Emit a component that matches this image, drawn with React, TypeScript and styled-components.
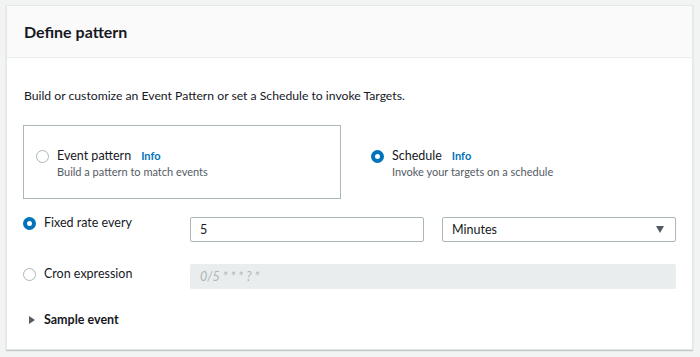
import styled, { createGlobalStyle } from 'styled-components';

const GlobalStyle = createGlobalStyle`
  html, body {
    margin: 0;
    padding: 0;
    background: #f2f3f3;
  }
  body {
    font-family: Lato, 'Liberation Sans', sans-serif;
    color: #16191f;
  }
`;

interface RadioProps {
  checked?: boolean;
}

const Radio = ({ checked = false }: RadioProps) => <RadioDot $checked={checked} />;

interface TileProps {
  title: string;
  description: string;
  checked?: boolean;
}

const Tile = ({ title, description, checked = false }: TileProps) => (
  <TileBox $outlined={!checked}>
    <Radio checked={checked} />
    <TileText>
      <TileTitle>
        {title}
        <InfoLink>Info</InfoLink>
      </TileTitle>
      <TileDesc>{description}</TileDesc>
    </TileText>
  </TileBox>
);

const App = () => {
  return (
    <Page>
      <GlobalStyle />
      <Card>
        <Header>
          <Title>Define pattern</Title>
        </Header>
        <Body>
          <Lead>Build or customize an Event Pattern or set a Schedule to invoke Targets.</Lead>
          <Tiles>
            <Tile title="Event pattern" description="Build a pattern to match events" />
            <Tile title="Schedule" description="Invoke your targets on a schedule" checked />
          </Tiles>

          <OptionRow $top={16}>
            <OptionLabel>
              <Radio checked />
              <span>Fixed rate every</span>
            </OptionLabel>
            <Field $offset={2}>
              <Input>5</Input>
            </Field>
            <Field $offset={2}>
              <Select>
                <span>Minutes</span>
                <Caret />
              </Select>
            </Field>
          </OptionRow>

          <OptionRow $top={22}>
            <OptionLabel $offset={2}>
              <Radio />
              <span>Cron expression</span>
            </OptionLabel>
            <WideField>
              <DisabledInput>0/5 * * * ? *</DisabledInput>
            </WideField>
          </OptionRow>

          <Expander>
            <Triangle />
            Sample event
          </Expander>
        </Body>
      </Card>
    </Page>
  );
};

const Page = styled.div`
  padding: 5px 7px 6px 6px;
`;

const Card = styled.section`
  background: #fff;
  border: 1px solid #e4e7e7;
  box-shadow: 0 1px 1px 0 rgba(0, 28, 36, 0.2);
`;

const Header = styled.div`
  height: 51px;
  display: flex;
  align-items: center;
  padding: 0 17px;
  background: #fafafa;
  border-bottom: 1px solid #eaeded;
`;

const Title = styled.h2`
  margin: 0;
  font-size: 16px;
  font-weight: 700;
  line-height: 20px;
  color: #16191f;
`;

const Body = styled.div`
  padding: 30px 16px 21px 16px;
`;

const Lead = styled.p`
  margin: 0 0 21px 1px;
  font-size: 12.2px;
  line-height: 16px;
`;

const Tiles = styled.div`
  display: grid;
  grid-template-columns: 1fr 1fr;
  column-gap: 17px;
`;

const TileBox = styled.div<{ $outlined: boolean }>`
  height: 74px;
  box-sizing: border-box;
  display: flex;
  align-items: center;
  gap: 8px;
  padding: 0 12px;
  border: 1px solid ${(p) => (p.$outlined ? '#aab7b8' : 'transparent')};
  & > span:first-child {
    align-self: flex-start;
    margin-top: 24px;
  }
`;

const TileText = styled.div`
  display: flex;
  flex-direction: column;
  margin-top: 2px;
`;

const TileTitle = styled.div`
  font-size: 12.5px;
  line-height: 16px;
  display: flex;
  align-items: baseline;
  gap: 10px;
`;

const InfoLink = styled.span`
  color: #0073bb;
  font-weight: 700;
  font-size: 11px;
`;

const TileDesc = styled.div`
  font-size: 11px;
  line-height: 15px;
  color: #545b64;
`;

const RadioDot = styled.span<{ $checked: boolean }>`
  flex: none;
  display: inline-block;
  box-sizing: border-box;
  width: 13px;
  height: 13px;
  border-radius: 50%;
  background: #fff;
  border: ${(p) => (p.$checked ? '4px solid #0073bb' : '1px solid #aab7b8')};
`;

const OptionRow = styled.div<{ $top: number }>`
  display: grid;
  grid-template-columns: 149px 1fr 1fr;
  column-gap: 18px;
  align-items: start;
  margin-top: ${(p) => p.$top}px;
`;

const OptionLabel = styled.div<{ $offset?: number }>`
  display: flex;
  align-items: center;
  gap: 8px;
  font-size: 12.5px;
  line-height: 16px;
  padding-top: ${(p) => p.$offset ?? 0}px;
`;

const Field = styled.div<{ $offset?: number }>`
  margin-top: ${(p) => p.$offset ?? 0}px;
`;

const WideField = styled.div`
  grid-column: 2 / 4;
`;

const Input = styled.div`
  height: 25px;
  box-sizing: border-box;
  border: 1px solid #aab7b8;
  border-radius: 2px;
  padding: 0 9px;
  display: flex;
  align-items: center;
  font-size: 12.5px;
  color: #16191f;
`;

const Select = styled(Input)`
  justify-content: space-between;
  padding-right: 11px;
`;

const Caret = styled.span`
  width: 0;
  height: 0;
  border-left: 4.5px solid transparent;
  border-right: 4.5px solid transparent;
  border-top: 7px solid #545b64;
`;

const DisabledInput = styled.div`
  height: 25px;
  box-sizing: border-box;
  border-radius: 2px;
  background: #eaeded;
  padding: 0 10px;
  display: flex;
  align-items: center;
  font-size: 12.5px;
  font-style: italic;
  color: #aab7b8;
`;

const Expander = styled.div`
  margin-top: 23px;
  display: flex;
  align-items: center;
  gap: 9px;
  padding-left: 6px;
  font-size: 12.5px;
  line-height: 16px;
  font-weight: 700;
`;

const Triangle = styled.span`
  width: 0;
  height: 0;
  border-top: 4px solid transparent;
  border-bottom: 4px solid transparent;
  border-left: 6px solid #545b64;
`;

export default App;
